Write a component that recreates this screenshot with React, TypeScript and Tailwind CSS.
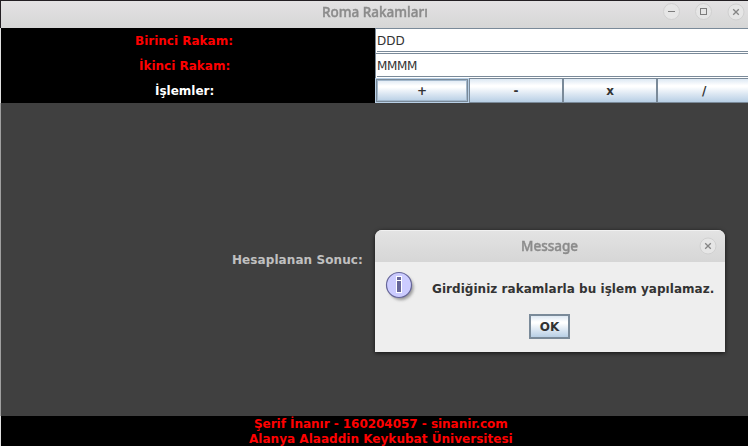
import React from "react";

const bold = "font-['DejaVu_Sans',sans-serif] font-bold text-[12px] leading-[15px] whitespace-pre";
const titleText = "font-['Noto_Sans',sans-serif] font-medium text-[15px] leading-[20px] text-[#8b8b8b] [-webkit-text-stroke:0.45px_#8b8b8b] whitespace-pre w-max origin-left";
const metal = "bg-[linear-gradient(to_bottom,#dde8f3_0%,#ffffff_28%,#ffffff_34%,#dde8f3_64%,#b8cfe5_100%)]";

function WindowButton({ kind, className = "" }: { kind: "min" | "max" | "close"; className?: string }) {
  const c = kind === "close" ? 9 : 8.5;
  return (
    <svg width="18" height="18" viewBox="0 0 18 18" className={`shrink-0 ${className}`} fill="none">
      <circle cx={c} cy={c} r="8" fill="#e6e6e6" stroke="#d0d0d0" strokeWidth="1" />
      {kind === "min" && <path d="M5 8.5h7" stroke="#7d7d7d" />}
      {kind === "max" && <rect x="5.5" y="5.5" width="6" height="6" stroke="#7d7d7d" />}
      {kind === "close" && <path d="M6.2 6.2l5.6 5.6M11.8 6.2l-5.6 5.6" stroke="#858585" strokeWidth="1.3" />}
    </svg>
  );
}

function Field({ value, className = "" }: { value: string; className?: string }) {
  return (
    <div className="h-[25px] bg-white border-l border-t border-[#7a8a99] flex flex-col">
      <div className={`h-[22px] pl-px pt-[5px] font-['DejaVu_Sans',sans-serif] text-[12px] leading-[15px] text-[#333333] ${className}`}>{value}</div>
      <div className="h-px ml-px bg-[#7a8a99]" />
    </div>
  );
}

function Info() {
  return (
    <svg width="32" height="32" viewBox="0 0 32 32" fill="none">
      <defs>
        <filter id="soft" x="-30%" y="-30%" width="160%" height="160%">
          <feGaussianBlur stdDeviation="1.5" />
        </filter>
      </defs>
      <circle cx="16" cy="16.5" r="12.5" fill="#999999" filter="url(#soft)" />
      <circle cx="14" cy="14" r="12.5" fill="#ccccff" stroke="#666699" strokeWidth="1.2" />
      <path d="M11 5h6v17h-6z" fill="#ffffff" />
      <path d="M12 6h4v3h-4zM12 10h4v11h-4z" fill="#666699" />
    </svg>
  );
}

export default function App() {
  return (
    <div className="relative w-[748px] h-[446px] overflow-hidden bg-[#404040] flex flex-col">
      <div className="h-[28px] shrink-0 border-t border-l border-[#231f23] bg-linear-to-b from-[#e3e2e3] to-[#d6d6d6] flex">
        <div className="w-[662px] pl-[321px]">
          <div className={`${titleText} scale-x-[0.9]`}>Roma Rakamları</div>
        </div>
        <div className="flex pt-[2px] gap-[14px]">
          <WindowButton kind="min" />
          <WindowButton kind="max" />
          <WindowButton kind="close" />
        </div>
      </div>
      <div className="h-[75px] shrink-0 flex">
        <div className="w-[375px] bg-black border-l border-[#e0e0e0] flex flex-col">
          <div className={`${bold} h-[25px] pt-[6px] pl-[134px] text-[#ff0000]`}>Birinci Rakam:</div>
          <div className={`${bold} h-[25px] pt-[6px] pl-[138px] text-[#ff0000]`}>İkinci Rakam:</div>
          <div className={`${bold} h-[25px] pt-[6px] pl-[154px] text-white`}>İşlemler:</div>
        </div>
        <div className="w-[373px] flex flex-col">
          <Field value="DDD" />
          <Field value="MMMM" className="tracking-[-0.35px]" />
          <div className="h-[25px] flex text-[#333333]">
            <div className="w-[94px] border border-[#b8cfe5] bg-[#b8cfe5]">
              <div className={`${bold} ${metal} h-[23px] border border-[#7a8a99] outline-1 -outline-offset-2 outline-[#a3b8cc] text-center pt-[4px]`}>+</div>
            </div>
            <div className={`${bold} ${metal} w-[94px] border border-[#7a8a99] text-center pt-[5px]`}>-</div>
            <div className={`${bold} ${metal} w-[94px] border border-[#7a8a99] text-center pt-[5px]`}>x</div>
            <div className={`${bold} ${metal} w-[91px] border-l border-y border-[#7a8a99] pl-[44px] pt-[5px]`}>/</div>
          </div>
        </div>
      </div>
      <div className="h-[313px] shrink-0 border-l border-[#a0a0a0] pt-[150px] pl-[231px]">
        <div className={`${bold} tracking-[0.08px] text-[#c0c0c0]`}>Hesaplanan Sonuc:</div>
      </div>
      <div className="h-[30px] shrink-0 bg-black border-l border-[#e0e0e0] pt-px text-[#ff0000]">
        <div className={`${bold} pl-[253px] tracking-[-0.03px]`}>Şerif İnanır - 160204057 - sinanir.com</div>
        <div className={`${bold} pl-[248px] tracking-[0.03px]`}>Alanya Alaaddin Keykubat Üniversitesi</div>
      </div>

      <div className="absolute left-[375px] top-[230px] w-[350px] h-[122px] rounded-t-[7px] overflow-hidden bg-[#eeeeee] shadow-[0_1px_4px_rgba(0,0,0,0.7)] flex flex-col">
        <div className="h-[32px] shrink-0 border-t border-[#f1f1f1] bg-linear-to-b from-[#e3e3e3] to-[#d6d6d6] flex">
          <div className="w-[324px] pl-[146px] pt-[4px]">
            <div className={`${titleText} scale-x-[0.9]`}>Message</div>
          </div>
          <WindowButton kind="close" className="mt-[6px]" />
        </div>
        <div className="h-[52px] flex pl-[10px]">
          <div className="w-[47px] pt-[9px]"><Info /></div>
          <div className={`${bold} pt-[20px] tracking-[0.04px] text-[#333333]`}>Girdiğiniz rakamlarla bu işlem yapılamaz.</div>
        </div>
        <div className={`${bold} ${metal} ml-[154px] w-[41px] h-[25px] border-2 border-[#7a8a99] text-center pt-[4px] text-[#333333]`}>OK</div>
      </div>
    </div>
  );
}
